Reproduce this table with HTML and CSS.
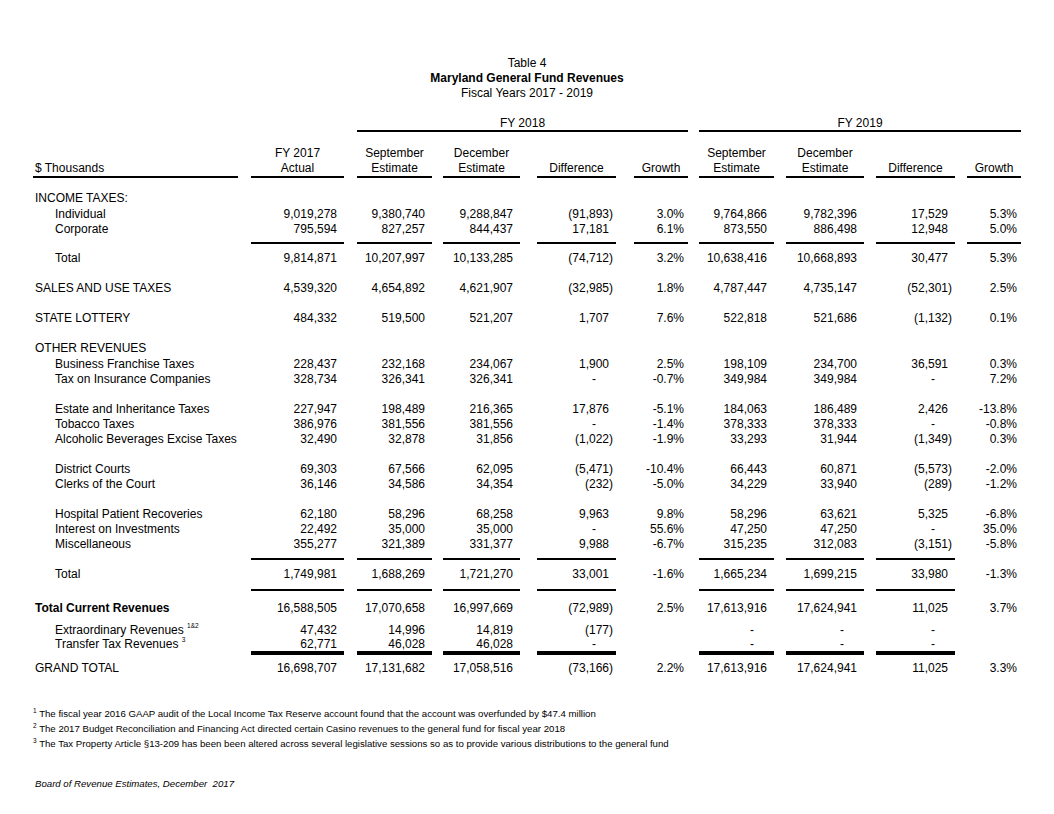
FILE: index.html
```html
<!DOCTYPE html>
<html lang="en">
<head>
<meta charset="utf-8">
<title>Table 4 - Maryland General Fund Revenues</title>
<link rel="stylesheet" href="styles.css">
</head>
<body>
<div class="report">
  <header class="title">
    <div>Table 4</div>
    <div class="name">Maryland General Fund Revenues</div>
    <div>Fiscal Years 2017 - 2019</div>
  </header>

  <div class="table">
    <div class="cols groups">
      <div class="fy fy18"><div class="g">FY 2018</div></div>
      <div class="fy fy19"><div class="g">FY 2019</div></div>
    </div>

    <div class="cols row hdr">
      <div><div class="h l">$ Thousands</div></div>
      <div><div class="h">FY 2017<br>Actual</div></div>
      <div><div class="h">September<br>Estimate</div></div>
      <div><div class="h">December<br>Estimate</div></div>
      <div><div class="h">Difference</div></div>
      <div><div class="h">Growth</div></div>
      <div><div class="h">September<br>Estimate</div></div>
      <div><div class="h">December<br>Estimate</div></div>
      <div><div class="h">Difference</div></div>
      <div><div class="h">Growth</div></div>
    </div>

    <div class="cols row line cat first"><div class="lbl">INCOME TAXES:</div></div>
    <div class="cols row line"><div class="lbl ind">Individual</div><div>9,019,278</div><div>9,380,740</div><div>9,288,847</div><div class="n">(91,893)</div><div>3.0%</div><div>9,764,866</div><div>9,782,396</div><div>17,529</div><div>5.3%</div></div>
    <div class="cols row line"><div class="lbl ind">Corporate</div><div>795,594</div><div>827,257</div><div>844,437</div><div>17,181</div><div>6.1%</div><div>873,550</div><div>886,498</div><div>12,948</div><div>5.0%</div></div>
    <div class="cols row rule rule-sub"><span></span><span class="on"></span><span class="on"></span><span class="on"></span><span class="on"></span><span class="on"></span><span class="on"></span><span class="on"></span><span class="on"></span><span class="on"></span></div>
    <div class="cols row line"><div class="lbl ind">Total</div><div>9,814,871</div><div>10,207,997</div><div>10,133,285</div><div class="n">(74,712)</div><div>3.2%</div><div>10,638,416</div><div>10,668,893</div><div>30,477</div><div>5.3%</div></div>

    <div class="cols row line sp"><div class="lbl">SALES AND USE TAXES</div><div>4,539,320</div><div>4,654,892</div><div>4,621,907</div><div class="n">(32,985)</div><div>1.8%</div><div>4,787,447</div><div>4,735,147</div><div class="n">(52,301)</div><div>2.5%</div></div>

    <div class="cols row line sp"><div class="lbl">STATE LOTTERY</div><div>484,332</div><div>519,500</div><div>521,207</div><div>1,707</div><div>7.6%</div><div>522,818</div><div>521,686</div><div class="n">(1,132)</div><div>0.1%</div></div>

    <div class="cols row line cat sp"><div class="lbl">OTHER REVENUES</div></div>
    <div class="cols row line"><div class="lbl ind">Business Franchise Taxes</div><div>228,437</div><div>232,168</div><div>234,067</div><div>1,900</div><div>2.5%</div><div>198,109</div><div>234,700</div><div>36,591</div><div>0.3%</div></div>
    <div class="cols row line"><div class="lbl ind">Tax on Insurance Companies</div><div>328,734</div><div>326,341</div><div>326,341</div><div class="d">-</div><div>-0.7%</div><div>349,984</div><div>349,984</div><div class="d">-</div><div>7.2%</div></div>

    <div class="cols row line sp"><div class="lbl ind">Estate and Inheritance Taxes</div><div>227,947</div><div>198,489</div><div>216,365</div><div>17,876</div><div>-5.1%</div><div>184,063</div><div>186,489</div><div>2,426</div><div>-13.8%</div></div>
    <div class="cols row line"><div class="lbl ind">Tobacco Taxes</div><div>386,976</div><div>381,556</div><div>381,556</div><div class="d">-</div><div>-1.4%</div><div>378,333</div><div>378,333</div><div class="d">-</div><div>-0.8%</div></div>
    <div class="cols row line"><div class="lbl ind">Alcoholic Beverages Excise Taxes</div><div>32,490</div><div>32,878</div><div>31,856</div><div class="n">(1,022)</div><div>-1.9%</div><div>33,293</div><div>31,944</div><div class="n">(1,349)</div><div>0.3%</div></div>

    <div class="cols row line sp"><div class="lbl ind">District Courts</div><div>69,303</div><div>67,566</div><div>62,095</div><div class="n">(5,471)</div><div>-10.4%</div><div>66,443</div><div>60,871</div><div class="n">(5,573)</div><div>-2.0%</div></div>
    <div class="cols row line"><div class="lbl ind">Clerks of the Court</div><div>36,146</div><div>34,586</div><div>34,354</div><div class="n">(232)</div><div>-5.0%</div><div>34,229</div><div>33,940</div><div class="n">(289)</div><div>-1.2%</div></div>

    <div class="cols row line sp"><div class="lbl ind">Hospital Patient Recoveries</div><div>62,180</div><div>58,296</div><div>68,258</div><div>9,963</div><div>9.8%</div><div>58,296</div><div>63,621</div><div>5,325</div><div>-6.8%</div></div>
    <div class="cols row line"><div class="lbl ind">Interest on Investments</div><div>22,492</div><div>35,000</div><div>35,000</div><div class="d">-</div><div>55.6%</div><div>47,250</div><div>47,250</div><div class="d">-</div><div>35.0%</div></div>
    <div class="cols row line"><div class="lbl ind">Miscellaneous</div><div>355,277</div><div>321,389</div><div>331,377</div><div>9,988</div><div>-6.7%</div><div>315,235</div><div>312,083</div><div class="n">(3,151)</div><div>-5.8%</div></div>
    <div class="cols row rule rule-mid"><span></span><span class="on"></span><span class="on"></span><span class="on"></span><span class="on"></span><span></span><span class="on"></span><span class="on"></span><span class="on"></span><span></span></div>
    <div class="cols row line"><div class="lbl ind">Total</div><div>1,749,981</div><div>1,688,269</div><div>1,721,270</div><div>33,001</div><div>-1.6%</div><div>1,665,234</div><div>1,699,215</div><div>33,980</div><div>-1.3%</div></div>
    <div class="cols row rule rule-tot"><span></span><span class="on"></span><span class="on"></span><span class="on"></span><span class="on"></span><span></span><span class="on"></span><span class="on"></span><span class="on"></span><span></span></div>

    <div class="cols row line strong"><div class="lbl">Total Current Revenues</div><div>16,588,505</div><div>17,070,658</div><div>16,997,669</div><div class="n">(72,989)</div><div>2.5%</div><div>17,613,916</div><div>17,624,941</div><div>11,025</div><div>3.7%</div></div>
    <div class="cols row line tight"><div class="lbl ind">Extraordinary Revenues <sup class="ref">1&amp;2</sup></div><div>47,432</div><div>14,996</div><div>14,819</div><div class="n">(177)</div><div></div><div class="d">-</div><div class="d">-</div><div class="d">-</div><div></div></div>
    <div class="cols row line tight"><div class="lbl ind">Transfer Tax Revenues <sup class="ref">3</sup></div><div>62,771</div><div>46,028</div><div>46,028</div><div class="d">-</div><div></div><div class="d">-</div><div class="d">-</div><div class="d">-</div><div></div></div>
    <div class="cols row rule thick"><span></span><span class="on"></span><span class="on"></span><span class="on"></span><span class="on"></span><span></span><span class="on"></span><span class="on"></span><span class="on"></span><span></span></div>
    <div class="cols row line"><div class="lbl">GRAND TOTAL</div><div>16,698,707</div><div>17,131,682</div><div>17,058,516</div><div class="n">(73,166)</div><div>2.2%</div><div>17,613,916</div><div>17,624,941</div><div>11,025</div><div>3.3%</div></div>
  </div>

  <div class="notes">
    <p><sup>1</sup>The fiscal year 2016 GAAP audit of the Local Income Tax Reserve account found that the account was overfunded by $47.4 million</p>
    <p><sup>2</sup>The 2017 Budget Reconciliation and Financing Act directed certain Casino revenues to the general fund for fiscal year 2018</p>
    <p><sup>3</sup>The Tax Property Article §13-209 has been been altered across several legislative sessions so as to provide various distributions to the general fund</p>
  </div>

  <div class="source">Board of Revenue Estimates, December&nbsp; 2017</div>
</div>
</body>
</html>
```

FILE: styles.css
```css
html, body {
  margin: 0;
  background: #fff;
}

body {
  color: #000;
  font-family: "Liberation Sans", Arial, sans-serif;
  font-size: 12px;
  line-height: 15px;
}

.report {
  padding-top: 56px;
}

.title {
  text-align: center;
}

.title .name {
  font-weight: bold;
}

.table {
  padding-left: 33px;
}

.cols {
  display: grid;
  grid-template-columns: 205px 106px 88px 88px 96px 72px 86px 90px 91px 66px;
}

/* FY group headers */
.groups {
  margin-top: 15px;
}

.fy18 {
  grid-column: 3 / 7;
  padding-left: 13px;
}

.fy19 {
  grid-column: 7 / 11;
  padding-left: 11px;
}

.g {
  line-height: 14px;
  border-bottom: 2px solid #000;
  text-align: center;
}

/* column gaps */
.row > :nth-child(2),
.row > :nth-child(3) { padding-left: 13px; }
.row > :nth-child(4) { padding-left: 11px; }
.row > :nth-child(5) { padding-left: 17px; }
.row > :nth-child(6) { padding-left: 18px; }
.row > :nth-child(7) { padding-left: 11px; }
.row > :nth-child(n+8) { padding-left: 12px; }

/* column headers */
.hdr {
  margin-top: 14px;
}

.hdr > div {
  display: flex;
  flex-direction: column;
  justify-content: flex-end;
}

.h {
  border-bottom: 2px solid #000;
  text-align: center;
}

.h.l {
  text-align: left;
  padding-left: 2px;
}

/* data lines */
.line > :nth-child(n+2) {
  text-align: right;
  padding-right: 7px;
  white-space: nowrap;
}

.line > :nth-child(6),
.line > :nth-child(10) {
  padding-right: 4px;
}

.line > .n { padding-right: 3px; }
.line > .d { padding-right: 20px; }

.lbl {
  padding-left: 2px;
  white-space: nowrap;
}

.lbl.ind {
  padding-left: 22px;
}

.first { margin-top: 13px; }
.cat { margin-bottom: 1px; }
.sp { margin-top: 15px; }

.strong .lbl {
  font-weight: bold;
}

.strong {
  margin-bottom: 6.5px;
}

.tight {
  line-height: 14.5px;
}

.ref {
  font-size: 6.5px;
  line-height: 0;
  vertical-align: 6px;
}

/* rules */
.rule {
  height: 2px;
}

.rule > .on::after {
  content: "";
  display: block;
  height: 2px;
  background: #000;
}

.rule-sub { margin: 4.5px 0 7.5px; }
.rule-mid { margin: 5.5px 0 7.5px; }
.rule-tot { margin: 6.5px 0 10.5px; }

.rule.thick {
  height: 4px;
  margin: -1px 0 6.5px;
}

.rule.thick > .on::after {
  height: 4px;
}

/* footnotes */
.notes {
  margin-top: 30px;
  padding-left: 33px;
  font-size: 9.65px;
  line-height: 15px;
}

.notes p {
  margin: 0;
  white-space: nowrap;
}

.notes sup {
  font-size: 6.5px;
  line-height: 0;
  vertical-align: 4px;
  margin-right: 2.5px;
}

.source {
  margin-top: 25px;
  padding-left: 35px;
  font-size: 9.65px;
  font-style: italic;
  line-height: 15px;
}
```
